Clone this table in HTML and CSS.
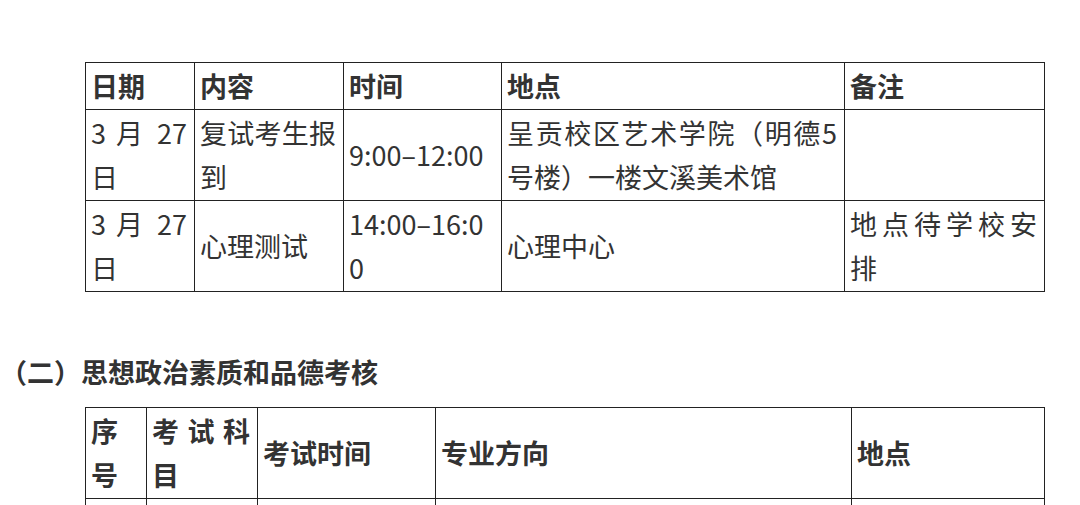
FILE: index.html
```html
<!DOCTYPE html>
<html lang="zh-CN">
<head>
<meta charset="utf-8">
<link rel="stylesheet" href="styles.css">
</head>
<body>
<div class="page">
  <table class="grid grid-top">
    <colgroup>
      <col class="c109"><col class="c149"><col class="c158"><col class="c343"><col class="c200">
    </colgroup>
    <tr class="head">
      <th>日期</th><th>内容</th><th>时间</th><th>地点</th><th>备注</th>
    </tr>
    <tr>
      <td>3 月 27日</td>
      <td>复试考生报到</td>
      <td>9:00–12:00</td>
      <td>呈贡校区艺术学院（明德5号楼）一楼文溪美术馆</td>
      <td></td>
    </tr>
    <tr>
      <td>3 月 27日</td>
      <td>心理测试</td>
      <td>14:00–16:00</td>
      <td>心理中心</td>
      <td>地点待学校安排</td>
    </tr>
  </table>

  <h2 class="section-title">（二）思想政治素质和品德考核</h2>

  <table class="grid grid-bottom">
    <colgroup>
      <col class="c61"><col class="c111"><col class="c178"><col class="c416"><col class="c193">
    </colgroup>
    <tr class="head">
      <th>序号</th><th>考试科目</th><th>考试时间</th><th>专业方向</th><th>地点</th>
    </tr>
    <tr>
      <td>&nbsp;</td><td>&nbsp;</td><td>&nbsp;</td><td>&nbsp;</td><td>&nbsp;</td>
    </tr>
  </table>
</div>
</body>
</html>
```

FILE: styles.css
```css
html, body {
  margin: 0;
  padding: 0;
  background: #ffffff;
}

body {
  font-family: "Noto Sans CJK SC", "Noto Sans", sans-serif;
  font-size: 27px;
  color: #333333;
}

.page {
  padding-top: 62px;
}

.grid {
  border-collapse: collapse;
  table-layout: fixed;
  width: 959px;
  margin-left: 85px;
}

.grid th,
.grid td {
  border: 1px solid #222222;
  padding: 1px 7px 1px 5px;
  line-height: 44px;
  text-align: justify;
  word-break: break-all;
  vertical-align: middle;
  font-weight: 400;
}

.grid th {
  font-weight: 700;
}

.c109 { width: 109px; }
.c149 { width: 149px; }
.c158 { width: 158px; }
.c343 { width: 343px; }
.c200 { width: 200px; }

.c61 { width: 61px; }
.c111 { width: 111px; }
.c178 { width: 178px; }
.c416 { width: 416px; }
.c193 { width: 193px; }

.section-title {
  margin: 58px 0 13px 0;
  font-size: 27px;
  line-height: 44px;
  font-weight: 700;
  color: #333333;
}
```
